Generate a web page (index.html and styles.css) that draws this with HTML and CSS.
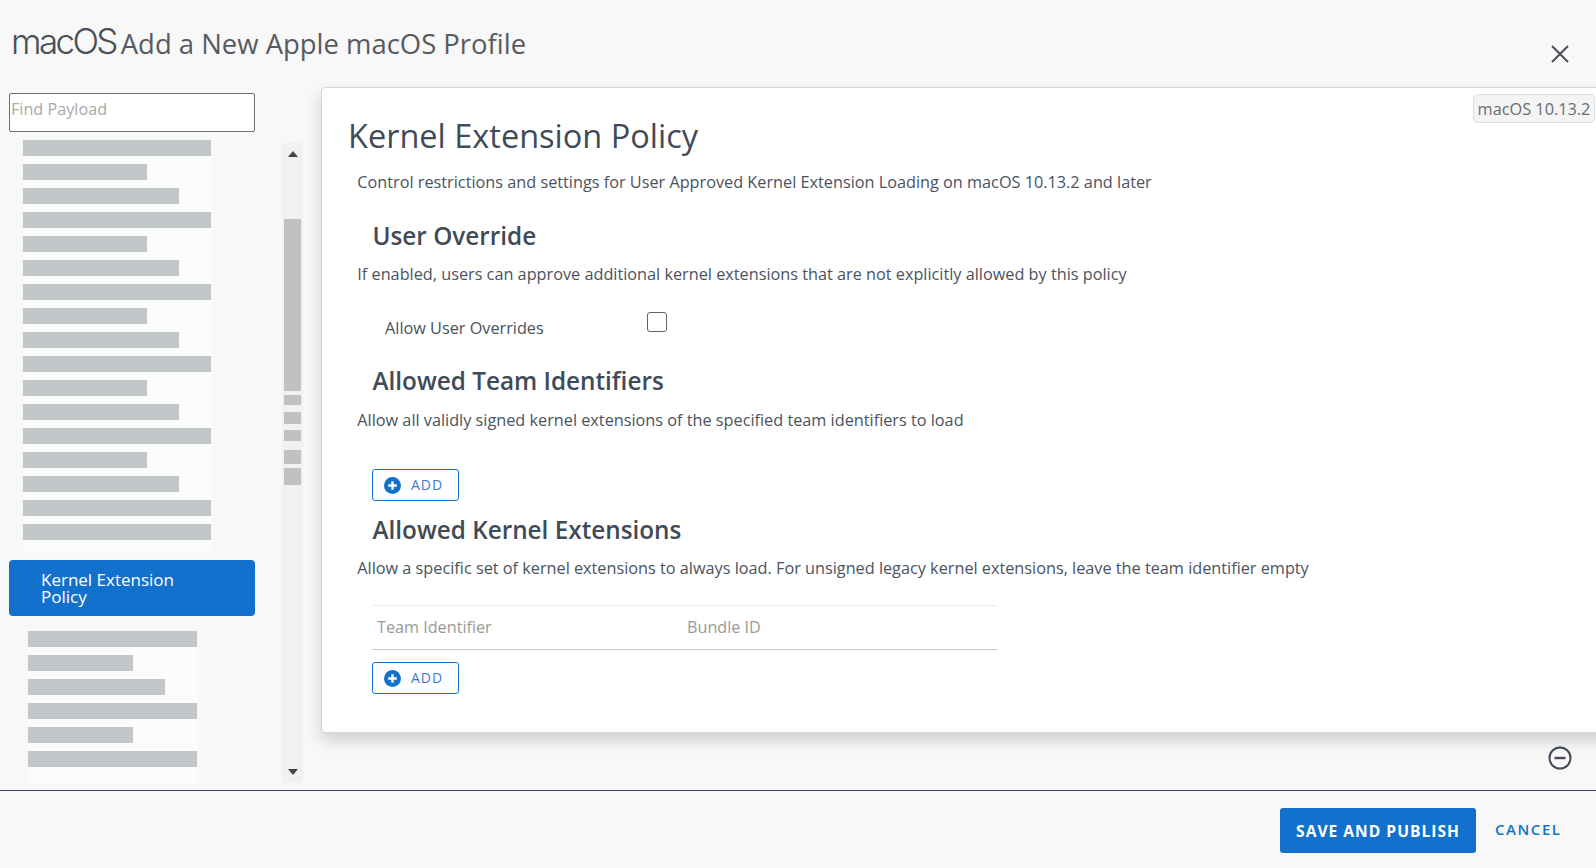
FILE: index.html
```html
<!DOCTYPE html>
<html lang="en">
<head>
<meta charset="utf-8">
<title>Add a New Apple macOS Profile</title>
<link rel="stylesheet" href="styles.css">
</head>
<body>
<header class="top">
  <div class="brand"><span class="logo">macOS</span><h1 class="page-title">Add a New Apple macOS Profile</h1></div>
  <svg class="close" width="20" height="20" viewBox="0 0 20 20"><path d="M2 2 18 18M18 2 2 18" fill="none" stroke="#4a4f55" stroke-width="2"/></svg>
</header>
<main class="main">
  <aside class="side">
    <div class="list">
      <input class="find" type="text" placeholder="Find Payload">
      <div class="group group-a">
        <i class="bar w1"></i><i class="bar w2"></i><i class="bar w3"></i>
        <i class="bar w1"></i><i class="bar w2"></i><i class="bar w3"></i>
        <i class="bar w1"></i><i class="bar w2"></i><i class="bar w3"></i>
        <i class="bar w1"></i><i class="bar w2"></i><i class="bar w3"></i>
        <i class="bar w1"></i><i class="bar w2"></i><i class="bar w3"></i>
        <i class="bar w1"></i><i class="bar w1"></i>
      </div>
      <div class="active">Kernel Extension Policy</div>
      <div class="group group-b">
        <i class="bar w1"></i><i class="bar w2"></i><i class="bar w3"></i>
        <i class="bar w1"></i><i class="bar w2"></i><i class="bar w1"></i>
      </div>
    </div>
    <div class="track">
      <svg class="arrow up" width="12" height="6" viewBox="0 0 12 6"><path d="M6 0 11 6H1Z" fill="#444"/></svg>
      <b class="thumb t1"></b><b class="thumb t2"></b><b class="thumb t3"></b><b class="thumb t4"></b><b class="thumb t5"></b><b class="thumb t6"></b>
      <svg class="arrow down" width="12" height="6" viewBox="0 0 12 6"><path d="M6 6 11 0H1Z" fill="#444"/></svg>
    </div>
  </aside>
  <div class="content">
    <section class="card">
      <span class="badge">macOS 10.13.2</span>
      <h2 class="card-title">Kernel Extension Policy</h2>
      <p class="desc intro">Control restrictions and settings for User Approved Kernel Extension Loading on macOS 10.13.2 and later</p>
      <h3 class="head h-user">User Override</h3>
      <p class="desc">If enabled, users can approve additional kernel extensions that are not explicitly allowed by this policy</p>
      <div class="field"><label class="field-label">Allow User Overrides</label><span class="check"></span></div>
      <h3 class="head h-team">Allowed Team Identifiers</h3>
      <p class="desc">Allow all validly signed kernel extensions of the specified team identifiers to load</p>
      <button class="add add-team"><svg width="17" height="17" viewBox="0 0 16 16"><circle cx="8" cy="8" r="8" fill="#1271cc"/><path d="M8 4v8M4 8h8" stroke="#fff" stroke-width="2.2"/></svg><span>ADD</span></button>
      <h3 class="head h-kext">Allowed Kernel Extensions</h3>
      <p class="desc">Allow a specific set of kernel extensions to always load. For unsigned legacy kernel extensions, leave the team identifier empty</p>
      <div class="table"><span class="col col-a">Team Identifier</span><span class="col">Bundle ID</span></div>
      <button class="add add-kext"><svg width="17" height="17" viewBox="0 0 16 16"><circle cx="8" cy="8" r="8" fill="#1271cc"/><path d="M8 4v8M4 8h8" stroke="#fff" stroke-width="2.2"/></svg><span>ADD</span></button>
    </section>
    <div class="collapse"><svg width="24" height="24" viewBox="0 0 24 24"><circle cx="12" cy="12" r="10.5" fill="none" stroke="#414b57" stroke-width="2"/><path d="M6.5 12h11" stroke="#414b57" stroke-width="2.4"/></svg></div>
  </div>
</main>
<footer class="foot">
  <button class="save">SAVE AND PUBLISH</button>
  <button class="cancel">CANCEL</button>
</footer>
</body>
</html>
```

FILE: styles.css
```css
* { box-sizing: border-box; }
html, body { margin: 0; height: 868px; overflow: hidden; }
body { background: #f8f8f8; font-family: "Open Sans", sans-serif; color: #414b57; display: flex; flex-direction: column; }

.top { height: 87px; flex: none; display: flex; justify-content: space-between; padding: 0 26px 0 11px; }
.brand { display: flex; align-items: baseline; height: 56px; padding-top: 23px; gap: 5px; }
.logo { font-family: "Inter", sans-serif; font-weight: 300; font-size: 35px; letter-spacing: -2.65px; color: #4a4f55; line-height: 36px; }
.page-title { margin: 0; font-weight: 400; font-size: 27.45px; line-height: 36px; color: #555b61; }
.close { margin-top: 44px; }

.main { flex: none; height: 703px; display: flex; }
.side { width: 321px; flex: none; display: flex; padding-left: 9px; }
.list { width: 246px; flex: none; display: flex; flex-direction: column; }
.find { width: 246px; height: 39px; margin-top: 6px; border: 1px solid #6f6f6f; border-radius: 2px; background: #fff; padding: 0 0 8px 1px; font: 16.2px "Open Sans", sans-serif; color: #333; outline: none; }
.find::placeholder { color: #a9a9a9; opacity: 1; }
.group { display: flex; flex-direction: column; gap: 8px; background: #fcfcfc; }
.group-a { width: 188px; margin: 8px 0 0 14px; height: 413px; }
.group-b { width: 169px; margin: 15px 0 0 19px; height: 152px; }
.bar { display: block; height: 16px; background: #c1c6c8; flex: none; }
.group-a .w1 { width: 188px; }
.group-a .w2 { width: 124px; }
.group-a .w3 { width: 156px; }
.group-b .w1 { width: 169px; }
.group-b .w2 { width: 105px; }
.group-b .w3 { width: 137px; }
.active { margin-top: 7px; height: 56px; background: #1271cc; border-radius: 4px; color: #fff; font-size: 17px; line-height: 17px; padding: 11px 60px 0 32px; }

.track { width: 21px; height: 640px; margin: 56px 0 0 27px; background: #f1f1f1; position: relative; display: flex; flex-direction: column; align-items: center; }
.arrow { position: absolute; left: 4.5px; }
.up { top: 8px; }
.down { bottom: 8px; }
.thumb { display: block; width: 17px; background: #c1c1c1; flex: none; }
.t1 { height: 172px; margin-top: 76px; }
.t2 { height: 10px; margin-top: 4px; }
.t3 { height: 12px; margin-top: 7px; }
.t4 { height: 11px; margin-top: 6px; }
.t5 { height: 14px; margin-top: 9px; }
.t6 { height: 17px; margin-top: 4px; }

.content { flex: 1; min-width: 0; }
.card { position: relative; width: 1290px; height: 646px; background: #fff; border: 1px solid #d4d4d4; border-radius: 4px 0 0 4px; box-shadow: 0 8px 16px rgba(0,0,0,.16); padding: 0 0 0 26px; }
.badge { position: absolute; top: 6px; left: 1151px; width: 122px; height: 29px; background: #f4f4f4; border: 1px solid #ddd; border-radius: 5px; font-size: 16.3px; line-height: 28px; text-align: center; color: #666d75; }
.card-title { margin: 0; padding-top: 25px; font-weight: 400; font-size: 32.5px; line-height: 46px; color: #414b57; }
.desc { margin: 0 0 0 9.3px; font-size: 16.25px; line-height: 20px; color: #4a535e; white-space: nowrap; }
.intro { margin-top: 13px; }
.head { margin: 0 0 0 24.5px; font-weight: 600; font-size: 24.3px; line-height: 32px; color: #414b57; }
.h-user { margin-top: 28px; }
.h-team { margin-top: 15px; }
.h-kext { margin-top: 13px; }
.head + .desc { margin-top: 12px; }
.h-team + .desc { margin-top: 13px; }
.h-kext + .desc { margin-top: 12px; }
.field { display: flex; margin: 28px 0 0 37px; height: 38px; }
.field-label { width: 262px; font-size: 16.25px; line-height: 20px; padding-top: 6px; color: #4a535e; }
.check { width: 20px; height: 20px; margin-top: 0; border: 1.5px solid #5b6570; border-radius: 3px; background: #fff; }
.add { display: flex; align-items: center; width: 87px; height: 32px; margin-left: 24px; padding: 0 0 0 11px; background: #fff; border: 1px solid #1271cc; border-radius: 3px; font: 14px "Open Sans", sans-serif; letter-spacing: 1px; color: #3f78cf; gap: 10px; }
.add span { margin-top: -2px; }
.add-team { margin-top: 39px; }
.add-kext { margin-top: 12px; }
.table { display: flex; height: 45px; margin: 27px 0 0 24px; width: 625px; border-top: 1px solid #ececec; border-bottom: 1px solid #c8c8c8; font-size: 16.2px; line-height: 43px; color: #9a9a9a; padding-left: 5px; }
.col-a { width: 310px; }

.collapse { display: flex; justify-content: flex-end; padding: 13px 24px 0 0; }

.foot { flex: 1; border-top: 1.5px solid #3b4a5e; display: flex; align-items: flex-start; padding: 17px 0 0 1280px; }
.save { width: 196px; height: 45px; background: #1271cc; border: 0; border-radius: 3px; color: #fff; font: 700 15.6px "Open Sans", sans-serif; letter-spacing: 1px; }
.cancel { margin: 11px 0 0 19px; padding: 0; border: 0; background: none; color: #1271cc; font: 600 15px "Open Sans", sans-serif; letter-spacing: 1.55px; }
```
